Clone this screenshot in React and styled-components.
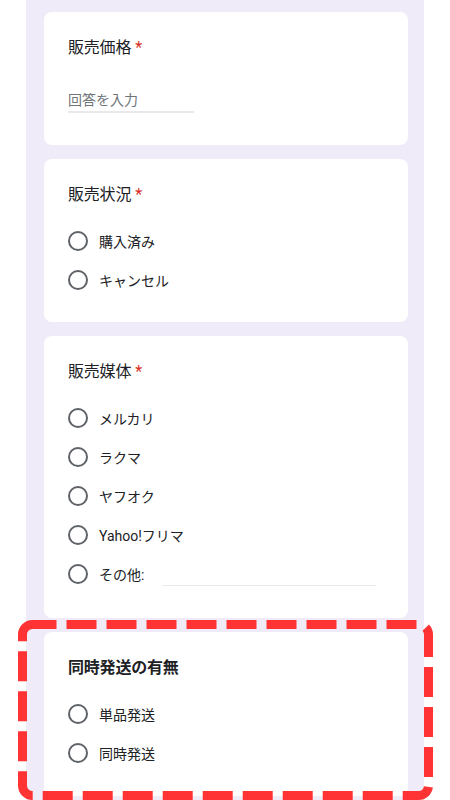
import React from 'react';
import styled, { createGlobalStyle } from 'styled-components';

const GlobalStyle = createGlobalStyle`
  html, body {
    margin: 0;
    padding: 0;
    background: #ffffff;
    overflow: hidden;
  }
  body {
    font-family: Roboto, "Noto Sans CJK JP", sans-serif;
    color: #202124;
  }
`;

const Page = styled.div`
  width: 450px;
  height: 800px;
  position: relative;
  overflow: hidden;
`;

const Column = styled.div`
  width: 398px;
  margin-left: 26px;
  min-height: 800px;
  background: #efebf8;
  padding: 12px 16px 0 18px;
  box-sizing: border-box;
  display: flex;
  flex-direction: column;
  gap: 14px;
`;

const Card = styled.div`
  background: #ffffff;
  border-radius: 8px;
  padding: 24px 24px ${(p) => p.$bottom || 24}px 24px;
  display: flex;
  flex-direction: column;
`;

const Title = styled.div`
  font-size: 16px;
  line-height: 24px;
  font-weight: ${(p) => (p.$bold ? 700 : 400)};
  color: #202124;
  letter-spacing: -0.2px;
`;

const Required = styled.span`
  color: #d93025;
  margin-left: 4px;
`;

const TextAnswer = styled.div`
  margin-top: 30px;
  width: 126px;
  font-size: 14px;
  line-height: 20px;
  color: #70757a;
  padding-bottom: 1px;
  border-bottom: 2px solid #e9e9ec;
`;

const Options = styled.div`
  margin-top: 14px;
  display: flex;
  flex-direction: column;
`;

const Option = styled.label`
  height: 39px;
  display: flex;
  align-items: center;
  font-size: 14px;
  color: #202124;
`;

const Radio = styled.span`
  width: 20px;
  height: 20px;
  box-sizing: border-box;
  border: 2px solid #5f6368;
  border-radius: 50%;
  margin-right: 11px;
  flex-shrink: 0;
`;

const OtherLine = styled.span`
  width: 214px;
  height: 1px;
  margin-left: 18px;
  align-self: flex-end;
  margin-bottom: 7px;
  background: #e9e9ec;
`;

const Highlight = styled.svg`
  position: absolute;
  left: 18px;
  top: 620px;
  pointer-events: none;
`;

const RadioCard = ({ title, required, bold, options, bottom }) => (
  <Card $bottom={bottom}>
    <Title $bold={bold}>
      {title}
      {required && <Required>*</Required>}
    </Title>
    <Options>
      {options.map((o) => (
        <Option key={o.label}>
          <Radio />
          {o.label}
          {o.other && <OtherLine />}
        </Option>
      ))}
    </Options>
  </Card>
);

export default function App() {
  return (
    <Page>
      <GlobalStyle />
      <Column>
        <Card $bottom={32}>
          <Title>
            販売価格<Required>*</Required>
          </Title>
          <TextAnswer>回答を入力</TextAnswer>
        </Card>
        <RadioCard
          title="販売状況"
          required
          bottom={23}
          options={[{ label: '購入済み' }, { label: 'キャンセル' }]}
        />
        <RadioCard
          title="販売媒体"
          required
          bottom={25}
          options={[
            { label: 'メルカリ' },
            { label: 'ラクマ' },
            { label: 'ヤフオク' },
            { label: 'Yahoo!フリマ' },
            { label: 'その他:', other: true },
          ]}
        />
        <RadioCard
          title="同時発送の有無"
          bold
          bottom={24}
          options={[{ label: '単品発送' }, { label: '同時発送' }]}
        />
      </Column>
      <Highlight width="415" height="180" viewBox="0 0 415 180">
        <rect
          x="4.5"
          y="4.5"
          width="406"
          height="171"
          rx="10"
          fill="none"
          stroke="#ff3333"
          strokeWidth="9"
          strokeDasharray="30 10"
          strokeDashoffset="6"
        />
      </Highlight>
    </Page>
  );
}
